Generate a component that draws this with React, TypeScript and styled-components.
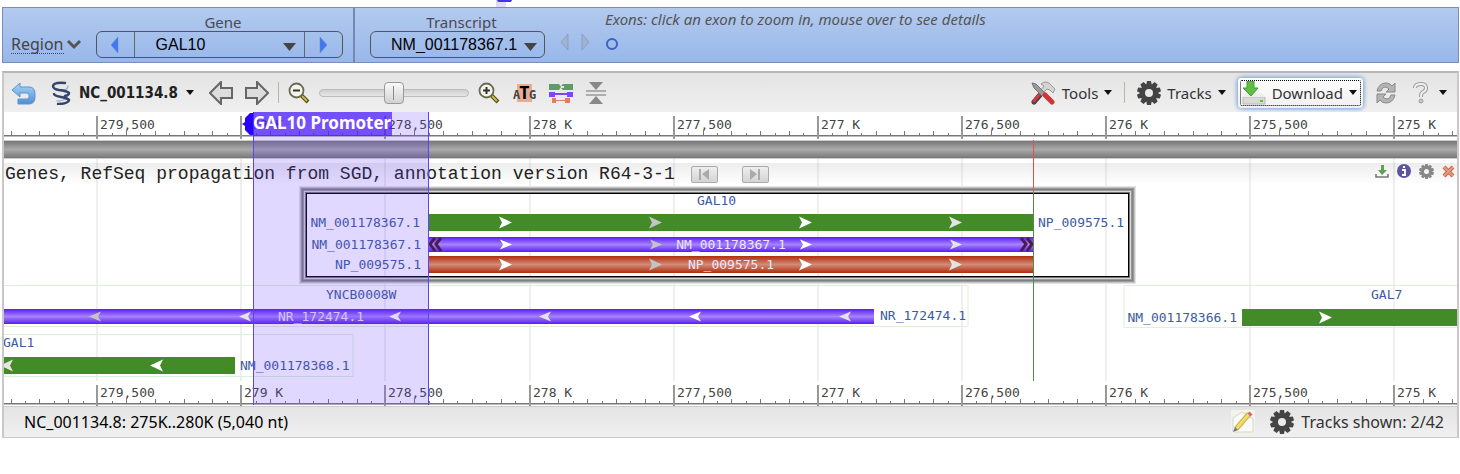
import React, { useLayoutEffect, useRef, useState } from "react";
import styled, { createGlobalStyle } from "styled-components";

const UI = `"Noto Sans", "Open Sans", sans-serif`;
const MONO = `"DejaVu Sans Mono", monospace`;

const GlobalStyle = createGlobalStyle`
  * { box-sizing: border-box; }
  body { margin: 0; background: #fff; font-family: ${UI}; font-size: 16px; color: #333; }
  button, select, input { font: inherit; color: inherit; margin: 0; }
`;

const Page = styled.main`
  padding: 0 1px 0 2px;
`;

const Peek = styled.div`
  height: 7px;
  padding-left: 494px;
  svg { display: block; }
`;

const Navigator = styled.section`
  display: flex;
  height: 56px;
  border: 1px solid #7a8db8;
  background: linear-gradient(#b3caee, #98b7ea);
`;

const GenePane = styled.div`
  display: flex;
  align-items: flex-end;
  gap: 14px;
  width: 352px;
  padding: 0 10px 4px 8px;
  border-right: 2px solid #7488b4;
`;

const TranscriptPane = styled.div`
  display: flex;
  align-items: flex-end;
  gap: 16px;
  padding: 0 0 4px 15px;
`;

const RegionLink = styled.a`
  display: flex;
  align-items: center;
  gap: 2px;
  height: 28px;
  color: #444;
  text-decoration: none;
  span { line-height: 18px; border-bottom: 1px dotted #444; }
`;

const Field = styled.div<{ $width: number }>`
  display: flex;
  flex-direction: column;
  width: ${(p) => p.$width}px;
  label { padding-left: 8px; text-align: center; font-size: 15px; line-height: 17px; color: #4a4a55; }
`;

const Combo = styled.div`
  position: relative;
  display: flex;
  height: 27px;
  border: 1px solid #555;
  border-radius: 6px;
`;

const StepButton = styled.button<{ $side: "left" | "right" }>`
  display: grid;
  place-items: center;
  width: 38px;
  padding: 0;
  border: 0;
  background: none;
  border-${(p) => (p.$side === "left" ? "right" : "left")}: 1px solid #666;
`;

const Picker = styled.select<{ $indent: number }>`
  flex: 1;
  min-width: 0;
  appearance: none;
  padding: 0 0 0 ${(p) => p.$indent}px;
  border: 0;
  background: none;
  color: #000;
  font: 16px "Liberation Sans", Arial, sans-serif;
`;

const DropMark = styled.svg<{ $right: number }>`
  position: absolute;
  top: 10px;
  right: ${(p) => p.$right}px;
  pointer-events: none;
`;

const ExonNav = styled.div`
  display: flex;
  align-items: flex-start;
  gap: 12px;
  height: 24px;
`;

const IconButton = styled.button`
  display: grid;
  place-items: center;
  padding: 0;
  border: 0;
  background: none;
`;

const Exons = styled.div`
  display: flex;
  flex-direction: column;
  align-items: flex-start;
  gap: 8px;
  height: 50px;
  padding-top: 1px;
  em { font-size: 15px; line-height: 20px; color: #555; }
`;

const Viewer = styled.section`
  margin-top: 8px;
  border: 2px solid #c9c7c7;
  border-top-color: #b9b5b5;
  border-bottom-width: 1px;
`;

const Toolbar = styled.div`
  display: flex;
  justify-content: space-between;
  height: 39px;
  padding: 0 10px 0 8px;
  background: linear-gradient(#e4e4e4, #efefef);
`;

const Group = styled.div<{ $gap: number }>`
  display: flex;
  align-items: center;
  gap: ${(p) => p.$gap}px;
`;

const MenuButton = styled.button<{ $gap?: number; $bold?: boolean }>`
  display: flex;
  align-items: center;
  gap: ${(p) => p.$gap ?? 6}px;
  height: 30px;
  padding: 0;
  border: 0;
  background: none;
  white-space: nowrap;
  color: ${(p) => (p.$bold ? "#222" : "#333")};
  font: ${(p) => (p.$bold ? `bold 15px "DejaVu Sans Condensed", "DejaVu Sans", sans-serif` : `15px ${UI}`)};
`;

const DownloadButton = styled(MenuButton)`
  padding: 0 6px 0 4px;
  border-radius: 4px;
  background: linear-gradient(#fff, #f0f0f0);
  box-shadow: 0 0 4px 1px #6f9fdc;
  outline: 1px dotted #000;
  outline-offset: -3px;
`;

const Separator = styled.span`
  width: 1px;
  height: 21px;
  background: #b5b5a8;
`;

const ZoomSlider = styled.input`
  appearance: none;
  width: 150px;
  height: 24px;
  background: none;
  &::-webkit-slider-runnable-track {
    height: 8px;
    border: 1px solid #bbb;
    border-radius: 4px;
    background: linear-gradient(#cfcfcf, #e6e6e6);
  }
  &::-webkit-slider-thumb {
    appearance: none;
    width: 20px;
    height: 22px;
    margin-top: -8px;
    border: 1px solid #999;
    border-radius: 4px;
    background: linear-gradient(#888, #888) center / 1px 14px no-repeat, linear-gradient(#fafafa, #d2d2d2);
  }
`;

const Canvas = styled.div`
  position: relative;
  height: 294px;
  overflow: hidden;
  background: #fff;
  svg { display: block; }
`;

const ChartText = styled.text<{ $kind: "ruler" | "label" | "inner" }>`
  font: 13px ${MONO};
  fill: ${(p) => ({ ruler: "#444", label: "#3b5ba0", inner: "#eee6ff" })[p.$kind]};
`;

const TrackHeader = styled.header`
  position: absolute;
  top: 51px;
  left: 0;
  right: 0;
  display: flex;
  align-items: center;
  height: 22px;
  padding: 0 2px 0 1px;
  background: linear-gradient(rgba(0, 0, 0, 0.07), rgba(0, 0, 0, 0));
  h2 {
    margin: 0 16px 0 0;
    color: #222;
    font: 18px/20px "Liberation Mono", "Courier New", monospace;
    white-space: nowrap;
  }
`;

const JumpButton = styled.button`
  display: grid;
  place-items: center;
  width: 27px;
  height: 17px;
  margin-right: 24px;
  padding: 0;
  border: 1px solid #aaa;
  border-radius: 2px;
  background: linear-gradient(#eee, #d4d4d4);
`;

const TrackActions = styled.div`
  display: flex;
  align-self: flex-start;
  align-items: center;
  gap: 8px;
  height: 16px;
  margin-left: auto;
`;

const Promoter = styled.div`
  position: absolute;
  top: 0;
  bottom: 1px;
  border: solid #5a45f0;
  border-width: 0 1px;
  background: rgba(100, 60, 250, 0.2);
`;

const PromoterName = styled.div`
  position: absolute;
  top: 0;
  left: -1px;
  height: 24px;
  padding-right: 1px;
  background: rgba(72, 28, 250, 0.72);
  color: #fff;
  font: bold 17px/22px "Noto Sans", sans-serif;
  white-space: nowrap;
`;

const PromoterGrip = styled.svg`
  position: absolute;
  top: 0;
  left: -12px;
`;

const StatusBar = styled.footer`
  display: flex;
  align-items: center;
  justify-content: space-between;
  height: 31px;
  padding: 0 13px 0 20px;
  border-top: 1px solid #ccc;
  background: linear-gradient(#e4e4e4, #f0f0f0);
  color: #000;
`;

const TrackCount = styled.span`
  color: #333;
`;

/* ---------- icons ---------- */

const Caret = () => (
  <svg width="8" height="5"><path d="M0 0h8L4 5z" fill="#111" /></svg>
);

const Undo = () => (
  <svg width="24" height="24" viewBox="0 0 24 24">
    <defs>
      <linearGradient id="undo" x2="0" y2="1">
        <stop offset="0" stopColor="#a9d6f8" /><stop offset="1" stopColor="#4f8fd6" />
      </linearGradient>
    </defs>
    <path d="M8 2v4h9q6 0 6 7v3q0 7-6 7H6v-5h9q2 0 2-2v-2q0-2-2-2H8v4L0 9z" fill="url(#undo)" stroke="#5b95cf" />
  </svg>
);

const Helix = () => (
  <svg width="20" height="24" viewBox="0 0 20 24" fill="none" strokeLinecap="round">
    <path d="M17 5l-1 3q-5 2-11 1M17 14l-1 3q-4 3-10 3" stroke="#aab4c6" strokeWidth="1.500" />
    <path d="M14 2Q3 1 2 5q0 3 6 4 8 1 10 3 0 2-4 3M3 13q1 2 7 3 6 1 8 3-1 4-11 4" stroke="#34476b" strokeWidth="2.500" />
  </svg>
);

const PanArrow = ({ flip }: { flip?: boolean }) => (
  <svg width="24" height="24" viewBox="0 0 24 24">
    <path transform={flip ? "matrix(-1 0 0 1 24 0)" : undefined} d="M1 12L12 1v6h11v10H12v6z" fill="#ddd" stroke="#666" strokeWidth="2" />
  </svg>
);

const Magnifier = ({ plus }: { plus?: boolean }) => (
  <svg width="22" height="22" viewBox="0 0 22 22">
    <path d="M13 13l7 7" stroke="#55501c" strokeWidth="4" />
    <path d="M14 14l5 5" stroke="#c8b94a" strokeWidth="2" />
    <circle cx="8.500" cy="8.500" r="7" fill="#f4f5ee" stroke="#6b6b50" strokeWidth="1.800" />
    <path d={plus ? "M5 8.500h7M8.500 5v7" : "M5 8.500h7"} stroke="#333" strokeWidth="2" />
  </svg>
);

const AtgText = styled.text`
  font: bold 12px ${MONO};
  fill: #444;
  &.mid { font-size: 18px; fill: #000; }
`;

const Atg = () => (
  <svg width="23" height="20" viewBox="0 0 23 20">
    <path d="M4 1h15v18H4z" fill="#e6ad94" />
    <AtgText x="0" y="16">A</AtgText>
    <AtgText x="16" y="16">G</AtgText>
    <AtgText className="mid" x="6" y="16">T</AtgText>
  </svg>
);

const TrackSet = () => (
  <svg width="24" height="20" viewBox="0 0 24 20">
    <path d="M0 1h10l2 3-2 3H0zM14 1h10v6H14l-2-2h3V3h-3z" fill="#5f9a6c" />
    <path d="M0 9h6v1h12V9h6v5h-6v-2H6v2H0z" fill="#7a48fa" />
    <path d="M3 15h4v2h9v-2h5v5h-5v-2H7v2H3z" fill="#d98068" />
  </svg>
);

const Collapse = () => (
  <svg width="20" height="22" viewBox="0 0 20 22">
    <path d="M3 0h14l-7 8zM3 22h14l-7-8z" fill="#888" />
    <path d="M0 9h20M0 13h20" stroke="#999" strokeWidth="1.500" />
  </svg>
);

const ToolsIcon = () => (
  <svg width="25" height="24" viewBox="0 0 25 24">
    <path d="M10 3q5-4 9 0l5 5-2 4-3-3-3-1-3 3-3-2 3-4z" fill="#d4d4d4" stroke="#999" />
    <path d="M12 11L9 14" stroke="#aaa" strokeWidth="3" />
    <path d="M9 14l-6 7" stroke="#444" strokeWidth="5" strokeLinecap="round" />
    <path d="M8 14l-5 6" stroke="#d23a3a" strokeWidth="3" strokeLinecap="round" />
    <path d="M1 2l4 1 9 9-3 3-8-8z" fill="#999" stroke="#777" />
    <path d="M14 14l7 7" stroke="#cf3535" strokeWidth="5" strokeLinecap="round" />
  </svg>
);

const Gear = ({ size, color }: { size: number; color: string }) => (
  <svg width={size} height={size} viewBox="0 0 24 24">
    <circle cx="12" cy="12" r="6.500" fill="none" stroke={color} strokeWidth="5" />
    {[0, 36, 72, 108, 144, 180, 216, 252, 288, 324].map((a) => (
      <path key={a} d="M10 0h4l1 5H9z" fill={color} transform={`rotate(${a} 12 12)`} />
    ))}
  </svg>
);

const DownloadIcon = () => (
  <svg width="24" height="24" viewBox="0 0 24 24">
    <path d="M1 16h22v7H1z" fill="#d8dbd8" stroke="#bbb" />
    <path d="M1 16l3-4h16l3 4z" fill="#eee" />
    <path d="M18 20h3" stroke="#5fc12e" strokeWidth="2" />
    <path d="M5 0h7v7h4l-7 8-8-8h4z" fill="#5fbf42" stroke="#4a9a38" />
  </svg>
);

const Refresh = () => (
  <svg width="22" height="22" viewBox="0 0 22 22" fill="#b4b4b4" stroke="#888">
    <path d="M2 9Q4 1 11 1q4 0 6 3l3-3v9h-9l3-3q-2-2-4-2-3 0-4 4z" />
    <path d="M20 13q-2 8-9 8-4 0-6-3l-3 3v-9h9l-3 3q2 2 4 2 3 0 4-4z" />
  </svg>
);

const Help = () => (
  <svg width="16" height="22" viewBox="0 0 16 22" fill="none">
    <path d="M2 6q0-4 6-4 5 0 5 4 0 3-3 4-2 1-2 5" stroke="#999" strokeWidth="4" />
    <path d="M2 6q0-4 6-4 5 0 5 4 0 3-3 4-2 1-2 5" stroke="#eee" strokeWidth="2" />
    <circle cx="8" cy="19" r="2" fill="#ccc" stroke="#999" />
  </svg>
);

const Note = () => (
  <svg width="24" height="24" viewBox="0 0 24 24">
    <path d="M0 0h24v24H0z" fill="#f3f3ea" />
    <path d="M2 8l9-6 11 7v13H2z" fill="#fafafa" stroke="#d5d5d0" />
    <path d="M5 19L18 4" stroke="#c4b050" strokeWidth="5" />
    <path d="M5 19L18 4" stroke="#f2dc68" strokeWidth="3" />
    <path d="M18 5l2-2" stroke="#cc6a6a" strokeWidth="4" />
    <path d="M2 22l2-5 3 3z" fill="#777" />
  </svg>
);

const SaveSmall = () => (
  <svg width="14" height="13" viewBox="0 0 14 13">
    <path d="M1 9v3h12V9" fill="none" stroke="#777" strokeWidth="1.600" />
    <path d="M6 0h3v5h3l-5 5-4-5h3z" fill="#5fa052" />
  </svg>
);

const InfoSmall = () => (
  <svg width="14" height="14" viewBox="0 0 14 14">
    <circle cx="7" cy="7" r="7" fill="#5c559c" />
    <path d="M5 6h3v5h1M5 11h4M6 3h2" stroke="#fff" strokeWidth="1.800" fill="none" />
  </svg>
);

const CloseSmall = () => (
  <svg width="13" height="13" viewBox="0 0 13 13">
    <path d="M2 2l9 9M11 2l-9 9" stroke="#c06a50" strokeWidth="4" />
    <path d="M2 2l9 9M11 2l-9 9" stroke="#e59a80" strokeWidth="2" />
  </svg>
);

const Triangle = ({ dir, fill }: { dir: "left" | "right"; fill: string }) => (
  <svg width="8" height="16" viewBox="0 0 8 16">
    <path d={dir === "left" ? "M7 0v16L0 8z" : "M1 0v16l7-8z"} fill={fill} stroke="#6c86c4" strokeWidth="0.500" />
  </svg>
);

const Jump = ({ flip }: { flip?: boolean }) => (
  <svg width="12" height="11" viewBox="0 0 12 11">
    <path transform={flip ? "matrix(-1 0 0 1 12 0)" : undefined} d="M1 0h2v11H1zM11 0v11L4 5z" fill="#aaa" />
  </svg>
);

/* ---------- genome chart ---------- */

const START = 279823;
const SPAN = 5040;
const MAJORS = [279500, 279000, 278500, 278000, 277500, 277000, 276500, 276000, 275500, 275000];
const MINORS = Array.from({ length: 101 }, (_, i) => 279800 - i * 50).filter((p) => p % 500 !== 0);

const majorLabel = (p: number) => (p % 1000 === 0 ? `${p / 1000} K` : p.toLocaleString("en-US"));

type Scale = (bp: number) => number;

const Ruler = ({ x, top, base, textY }: { x: Scale; top: number; base: number; textY: number }) => (
  <g>
    <rect x="0" y={base - 1} width="100%" height="1" fill="#777" />
    <rect x="0" y={base} width="100%" height="1" fill="#bbb" />
    {MINORS.map((p) => {
      const h = p % 100 === 0 ? 4 : 2;
      return <rect key={p} x={x(p)} y={base - 1 - h} width="1" height={h} fill="#777" />;
    })}
    {MAJORS.map((p) => (
      <g key={p}>
        <rect x={x(p) - 1} y={top} width="2" height={base - top + 3} fill="#999" />
        <ChartText $kind="ruler" x={x(p) + 3} y={textY}>{majorLabel(p)}</ChartText>
      </g>
    ))}
  </g>
);

type BarProps = {
  x: Scale; from: number; to: number; y: number; height: number;
  fill: string; arrows: number[]; reverse?: boolean; soft?: number;
};

const Bar = ({ x, from, to, y, height, fill, arrows, reverse, soft = -1 }: BarProps) => (
  <g>
    <rect x={x(from)} y={y} width={x(to) - x(from)} height={height} fill={fill} />
    {arrows.map((p, i) => (
      <path
        key={p}
        d={height > 15 ? "M-6-6L7 0-6 6-3 0z" : "M-5-5L7 0-5 5-2 0z"}
        fill={i === soft ? "#c4c4c4" : i % 2 ? "#e4e4e4" : "#fff"}
        transform={`translate(${x(p)} ${y + height / 2}) scale(${reverse ? -1 : 1} 1)`}
      />
    ))}
  </g>
);

const FRAME = [
  [-3, "#e4e4e4"], [-2, "#c4c4c4"], [-1, "#999"], [0, "#808080"], [1, "#999"], [2, "#d8d8d8"], [3, "#777"], [4, "#000"],
] as const;

const Chart = ({ x, width }: { x: Scale; width: number }) => {
  const g0 = x(278352);
  const g1 = x(276250);
  const mid = (g0 + g1) / 2;
  return (
    <svg width="100%" height="294" role="img" aria-label="Genes on NC_001134.8">
      <defs>
        <linearGradient id="grey" x2="0" y2="1">
          <stop offset="0" stopColor="#777" /><stop offset=".5" stopColor="#aaa" /><stop offset="1" stopColor="#777" />
        </linearGradient>
        <linearGradient id="violet" x2="0" y2="1">
          <stop offset="0" stopColor="#5a1cf5" /><stop offset=".5" stopColor="#a584fb" /><stop offset="1" stopColor="#5a1cf5" />
        </linearGradient>
        <linearGradient id="rust" x2="0" y2="1">
          <stop offset="0" stopColor="#b02c0c" /><stop offset=".5" stopColor="#d48c78" /><stop offset="1" stopColor="#b02c0c" />
        </linearGradient>
      </defs>
      {MAJORS.map((p) => <rect key={p} x={x(p) - 1} y="28" width="2" height="241" fill="#efefef" />)}
      <Ruler x={x} top={4} base={24} textY={17} />
      <rect y="29" width="100%" height="17" fill="url(#grey)" />
      <rect y="28" width="100%" height="1" fill="#ccc" />
      <rect y="46" width="100%" height="1" fill="#ccc" />

      <g fill="none" stroke="#dcf2d8">
        <path d={`M0 173.500H${x(276480)}V214.500H0`} />
        <path d={`M0 222.500H${x(278612)}V264.500H0`} />
        <path d={`M${width} 173.500H${x(275938)}V215.500H${width}`} />
      </g>

      {FRAME.map(([inset, color]) => (
        <rect
          key={inset} x={g0 - 125.5 + inset} y={77.500 + inset} fill="none" stroke={color}
          width={g1 - g0 + 224 - inset * 2} height={91 - inset * 2}
        />
      ))}
      <ChartText $kind="label" x={mid - 34} y="93">GAL10</ChartText>
      <ChartText $kind="label" x={g0 - 8} y="115" textAnchor="end">NM_001178367.1</ChartText>
      <ChartText $kind="label" x={g0 - 7} y="137" textAnchor="end">NM_001178367.1</ChartText>
      <ChartText $kind="label" x={g0 - 7} y="157" textAnchor="end">NP_009575.1</ChartText>
      <ChartText $kind="label" x={g1 + 4} y="115">NP_009575.1</ChartText>
      {[
        { y: 102, height: 17, fill: "#448a26" },
        { y: 125, height: 15, fill: "url(#violet)" },
        { y: 144, height: 17, fill: "url(#rust)" },
      ].map((b) => (
        <Bar key={b.y} x={x} from={278352} to={276250} arrows={[278085, 277565, 277045, 276524]} soft={1} {...b} />
      ))}
      <ChartText $kind="inner" x={mid} y="137" textAnchor="middle">NM_001178367.1</ChartText>
      <ChartText $kind="inner" x={mid} y="157" textAnchor="middle">NP_009575.1</ChartText>
      <g fill="none" stroke="#4b1c4e" strokeWidth="3">
        <path d={`M${g0 + 7} 126l-5 6 5 7M${g0 + 13} 126l-5 6 5 7`} />
        <path d={`M${g1 - 7} 126l5 6-5 7M${g1 - 13} 126l5 6-5 7`} />
      </g>

      <Bar x={x} from={START} to={276805} y={197} height={15} fill="url(#violet)" reverse soft={0}
        arrows={[279504, 278984, 278463, 277943, 277423, 276902]} />
      <ChartText $kind="label" x={x(278706)} y="187">YNCB0008W</ChartText>
      <ChartText $kind="inner" x={x(278873)} y="209">NR_172474.1</ChartText>
      <ChartText $kind="label" x={x(276805) + 6} y="208">NR_172474.1</ChartText>

      <ChartText $kind="label" x="-1" y="235">GAL1</ChartText>
      <Bar x={x} from={START} to={279022} y={245} height={17} fill="#448a26" reverse arrows={[279292, 279813]} />
      <ChartText $kind="label" x={x(279022) + 5} y="258">NM_001178368.1</ChartText>

      <ChartText $kind="label" x={x(275081)} y="187">GAL7</ChartText>
      <ChartText $kind="label" x={x(275529) - 5} y="210" textAnchor="end">NM_001178366.1</ChartText>
      <Bar x={x} from={275529} to={START - SPAN} y={197} height={17} fill="#448a26" arrows={[275241]} />

      <rect x={g1 - 1} y="28" width="1" height="53" fill="#e45050" />
      <rect x={g1 - 1} y="81" width="1" height="188" fill="#4f8f46" />
      <rect x={g0} y="28" width="1" height="53" fill="#e45050" />
      <rect x={g0} y="81" width="1" height="188" fill="#3f6f52" />
      <Ruler x={x} top={273} base={292} textY={285} />
    </svg>
  );
};

export default function App() {
  const canvas = useRef<HTMLDivElement>(null);
  const [width, setWidth] = useState(1453);
  useLayoutEffect(() => {
    const node = canvas.current;
    if (!node) return;
    const update = () => setWidth(node.clientWidth);
    update();
    const observer = new ResizeObserver(update);
    observer.observe(node);
    return () => observer.disconnect();
  }, []);
  const x: Scale = (bp) => Math.round(((START - bp) / SPAN) * width);

  return (
    <Page>
      <GlobalStyle />
      <Peek>
        <svg width="18" height="7" aria-hidden="true">
          <path d="M0 0h10v7H0z" fill="#e2daf8" />
          <path d="M1 0h15l-1 2H2z" fill="#4136e0" />
        </svg>
      </Peek>

      <Navigator>
        <GenePane>
          <RegionLink href="#region">
            <span>Region</span>
            <svg width="16" height="11"><path d="M2 2l6 6 6-6" fill="none" stroke="#555" strokeWidth="3" /></svg>
          </RegionLink>
          <Field $width={247}>
            <label htmlFor="gene">Gene</label>
            <Combo>
              <StepButton $side="left" aria-label="Previous gene"><Triangle dir="left" fill="#3f78f0" /></StepButton>
              <Picker id="gene" $indent={21}><option>GAL10</option></Picker>
              <DropMark $right={46} width="13" height="9"><path d="M0 1h13L6.500 9z" fill="#444" /></DropMark>
              <StepButton $side="right" aria-label="Next gene"><Triangle dir="right" fill="#3f78f0" /></StepButton>
            </Combo>
          </Field>
        </GenePane>
        <TranscriptPane>
          <Field $width={175}>
            <label htmlFor="transcript">Transcript</label>
            <Combo>
              <Picker id="transcript" $indent={20}><option>NM_001178367.1</option></Picker>
              <DropMark $right={7} width="13" height="9"><path d="M0 1h13L6.500 9z" fill="#444" /></DropMark>
            </Combo>
          </Field>
          <ExonNav>
            <IconButton aria-label="Previous exon"><Triangle dir="left" fill="#a3b3cc" /></IconButton>
            <IconButton aria-label="Next exon"><Triangle dir="right" fill="#a3b3cc" /></IconButton>
          </ExonNav>
          <Exons>
            <em>Exons: click an exon to zoom in, mouse over to see details</em>
            <IconButton aria-label="Exon 1">
              <svg width="14" height="14"><circle cx="7" cy="7" r="5" fill="none" stroke="#3a62c4" strokeWidth="2" /></svg>
            </IconButton>
          </Exons>
        </TranscriptPane>
      </Navigator>

      <Viewer>
        <Toolbar>
          <Group $gap={9}>
            <Group $gap={15}>
              <IconButton aria-label="Undo"><Undo /></IconButton>
              <MenuButton $bold $gap={8}><Helix />NC_001134.8<Caret /></MenuButton>
              <Group $gap={12}>
                <IconButton aria-label="Pan left"><PanArrow /></IconButton>
                <IconButton aria-label="Pan right"><PanArrow flip /></IconButton>
              </Group>
            </Group>
            <Separator />
            <IconButton aria-label="Zoom out"><Magnifier /></IconButton>
            <ZoomSlider type="range" aria-label="Zoom" defaultValue={50} />
            <Group $gap={13}>
              <IconButton aria-label="Zoom in"><Magnifier plus /></IconButton>
              <IconButton aria-label="Show sequence"><Atg /></IconButton>
              <IconButton aria-label="Track display"><TrackSet /></IconButton>
              <IconButton aria-label="Collapse"><Collapse /></IconButton>
            </Group>
          </Group>
          <Group $gap={16}>
            <Group $gap={12}>
              <MenuButton><ToolsIcon />Tools<Caret /></MenuButton>
              <Separator />
              <MenuButton><Gear size={24} color="#444" />Tracks<Caret /></MenuButton>
              <DownloadButton><DownloadIcon />Download<Caret /></DownloadButton>
              <IconButton aria-label="Reload"><Refresh /></IconButton>
            </Group>
            <MenuButton $gap={10} aria-label="Help"><Help /><Caret /></MenuButton>
          </Group>
        </Toolbar>

        <Canvas ref={canvas}>
          <Chart x={x} width={width} />
          <TrackHeader>
            <h2>Genes, RefSeq propagation from SGD, annotation version R64-3-1</h2>
            <JumpButton aria-label="Previous feature"><Jump /></JumpButton>
            <JumpButton aria-label="Next feature"><Jump flip /></JumpButton>
            <TrackActions>
              <IconButton aria-label="Save track"><SaveSmall /></IconButton>
              <IconButton aria-label="Track information"><InfoSmall /></IconButton>
              <IconButton aria-label="Track settings"><Gear size={15} color="#888" /></IconButton>
              <IconButton aria-label="Close track"><CloseSmall /></IconButton>
            </TrackActions>
          </TrackHeader>
          <Promoter style={{ left: x(278959), width: x(278352) - x(278959) + 1 }}>
            <PromoterGrip width="11" height="24"><path d="M11 1v22H8L3 18v-4L0 12l3-2V6l5-5z" fill="#2a00ff" /></PromoterGrip>
            <PromoterName>GAL10 Promoter</PromoterName>
          </Promoter>
        </Canvas>

        <StatusBar>
          <span>NC_001134.8: 275K..280K (5,040 nt)</span>
          <Group $gap={15}>
            <Note />
            <Group $gap={7}>
              <Gear size={24} color="#444" />
              <TrackCount>Tracks shown: 2/42</TrackCount>
            </Group>
          </Group>
        </StatusBar>
      </Viewer>
    </Page>
  );
}
